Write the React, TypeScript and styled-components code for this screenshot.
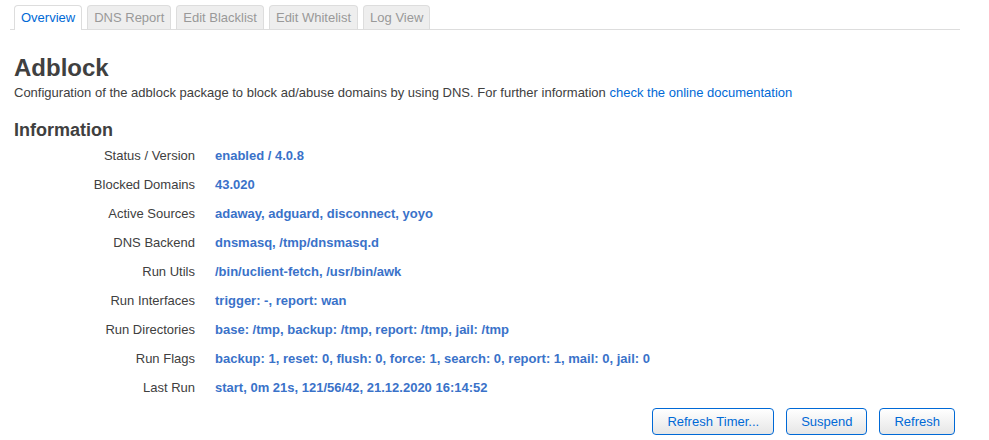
import styled, { createGlobalStyle } from 'styled-components';

const GlobalStyle = createGlobalStyle`
  html, body {
    margin: 0;
    padding: 0;
    background: #fff;
  }
  body {
    font-family: "Liberation Sans", Arial, sans-serif;
    font-size: 13px;
    color: #404040;
  }
`;

const tabs = ['Overview', 'DNS Report', 'Edit Blacklist', 'Edit Whitelist', 'Log View'];

const info: [string, string][] = [
  ['Status / Version', 'enabled / 4.0.8'],
  ['Blocked Domains', '43.020'],
  ['Active Sources', 'adaway, adguard, disconnect, yoyo'],
  ['DNS Backend', 'dnsmasq, /tmp/dnsmasq.d'],
  ['Run Utils', '/bin/uclient-fetch, /usr/bin/awk'],
  ['Run Interfaces', 'trigger: -, report: wan'],
  ['Run Directories', 'base: /tmp, backup: /tmp, report: /tmp, jail: /tmp'],
  ['Run Flags', 'backup: 1, reset: 0, flush: 0, force: 1, search: 0, report: 1, mail: 0, jail: 0'],
  ['Last Run', 'start, 0m 21s, 121/56/42, 21.12.2020 16:14:52'],
];

export default function App() {
  return (
    <>
      <GlobalStyle />
      <Page>
        <TabBar>
          {tabs.map((t, i) => (
            <Tab key={t} active={i === 0}>
              {t}
            </Tab>
          ))}
        </TabBar>
        <Title>Adblock</Title>
        <Description>
          Configuration of the adblock package to block ad/abuse domains by using DNS. For further
          information <DocLink href="#">check the online documentation</DocLink>
        </Description>
        <Section>Information</Section>
        <InfoTable>
          {info.map(([label, value]) => (
            <InfoRow key={label}>
              <Label>{label}</Label>
              <Value>{value}</Value>
            </InfoRow>
          ))}
        </InfoTable>
        <Actions>
          <Button>Refresh Timer...</Button>
          <Button>Suspend</Button>
          <Button>Refresh</Button>
        </Actions>
      </Page>
    </>
  );
}

const Page = styled.div`
  width: 950px;
  padding: 5px 0 0 10px;
`;

const TabBar = styled.ul`
  display: flex;
  gap: 5px;
  margin: 0;
  padding: 0 0 0 4px;
  list-style: none;
  border-bottom: 1px solid #ddd;
  height: 24px;
`;

const Tab = styled.li<{ active?: boolean }>`
  box-sizing: border-box;
  padding: 0 6px;
  line-height: 23px;
  font-size: 13px;
  border: 1px solid #ddd;
  border-bottom: none;
  border-radius: 4px 4px 0 0;
  background: ${(p) => (p.active ? '#fff' : '#eee')};
  color: ${(p) => (p.active ? '#0069d6' : '#999')};
  height: ${(p) => (p.active ? '25px' : '24px')};
`;

const Title = styled.h2`
  margin: 24px 0 0 4px;
  font-size: 24px;
  line-height: 28px;
  font-weight: bold;
  color: #404040;
`;

const Description = styled.p`
  margin: 2px 0 0 4px;
  line-height: 18px;
  font-size: 13px;
`;

const DocLink = styled.a`
  color: #0069d6;
  text-decoration: none;
`;

const Section = styled.h3`
  margin: 17px 0 0 4px;
  font-size: 18px;
  line-height: 22px;
  font-weight: bold;
  color: #404040;
`;

const InfoTable = styled.div`
  display: flex;
  flex-direction: column;
`;

const InfoRow = styled.div`
  display: grid;
  grid-template-columns: 185px 1fr;
  column-gap: 20px;
  height: 29px;
  align-items: center;
`;

const Label = styled.div`
  text-align: right;
  color: #404040;
`;

const Value = styled.div`
  color: #3a72c9;
  font-weight: bold;
`;

const Actions = styled.div`
  display: flex;
  justify-content: flex-end;
  gap: 12px;
  margin-top: 6px;
  padding-right: 5px;
`;

const Button = styled.button`
  height: 27px;
  padding: 0 14px;
  font-family: "Liberation Sans", Arial, sans-serif;
  font-size: 13px;
  color: #0069d6;
  border: 1px solid #0069d6;
  border-radius: 4px;
  background: linear-gradient(#ffffff, #e6e6e6);
`;
